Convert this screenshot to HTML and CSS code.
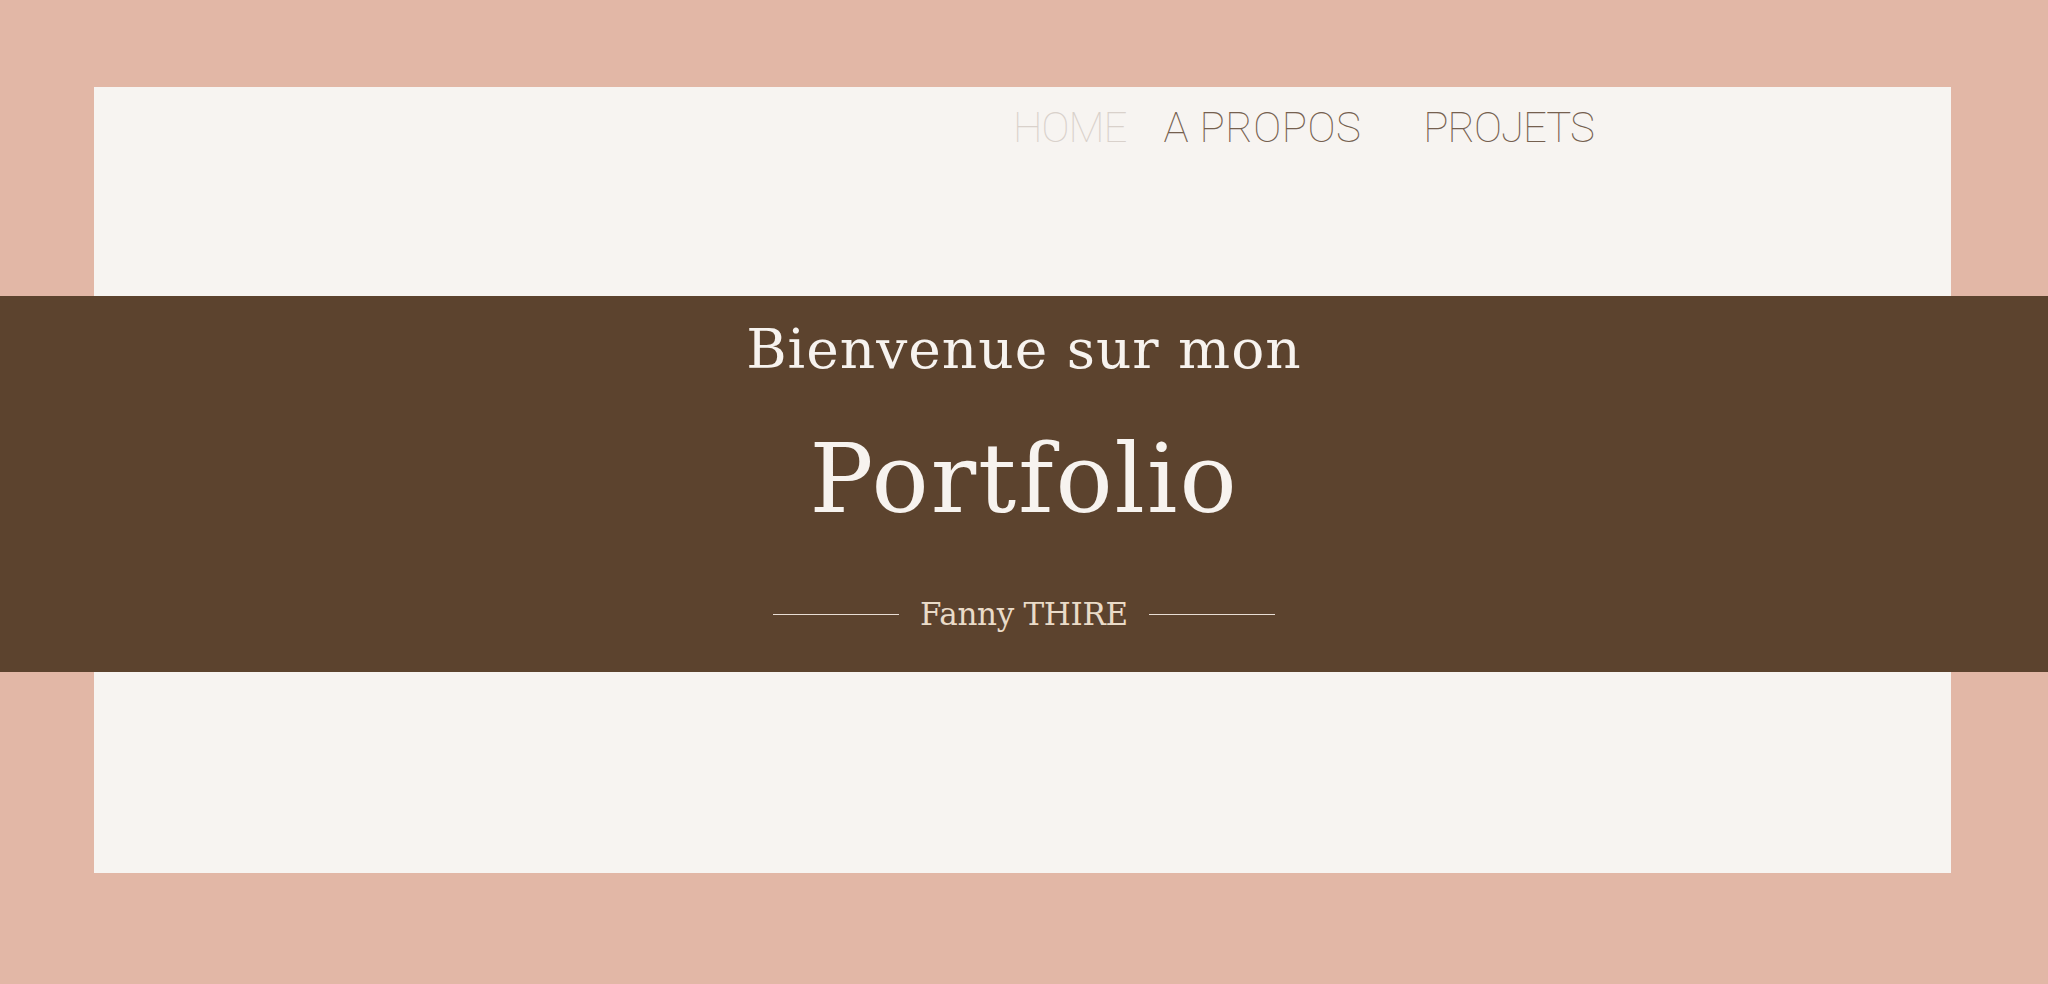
FILE: index.html
```html
<!DOCTYPE html>
<html lang="fr">
<head>
<meta charset="utf-8">
<title>Portfolio - Fanny THIRE</title>
<link rel="stylesheet" href="styles.css">
</head>
<body>
<div class="panel">
  <nav class="nav">
    <a class="nav-link nav-active" href="#">HOME</a>
    <a class="nav-link nav-apropos" href="#">A PROPOS</a>
    <a class="nav-link nav-projets" href="#">PROJETS</a>
  </nav>
  <header class="hero">
    <h2 class="hero-sub">Bienvenue sur mon</h2>
    <h1 class="hero-title">Portfolio</h1>
    <div class="hero-name">
      <span class="rule"></span>
      <span class="name">Fanny THIRE</span>
      <span class="rule"></span>
    </div>
  </header>
  <div class="panel-bottom"></div>
</div>
</body>
</html>
```

FILE: styles.css
```css
html, body {
  margin: 0;
  padding: 0;
}
body {
  background: #e2b7a6;
  padding-top: 87px;
  height: 984px;
  box-sizing: border-box;
  overflow: hidden;
}
.panel {
  margin: 0 97px 0 94px;
  background: #f7f4f1;
  height: 786px;
  display: flex;
  flex-direction: column;
}
.nav {
  height: 209px;
  box-sizing: border-box;
  padding: 16px 0 0 919px;
  display: flex;
  align-items: flex-start;
  font-family: "Roboto", "Inter", sans-serif;
  font-weight: 100;
  font-size: 42px;
  line-height: 50px;
}
.nav-link {
  text-decoration: none;
  color: #75604f;
  letter-spacing: -1px;
}
.nav-active {
  color: #d9d1cb;
}
.nav-apropos {
  margin-left: 37px;
  letter-spacing: 0.5px;
}
.nav-projets {
  margin-left: 62px;
}
.hero {
  margin: 0 -97px 0 -94px;
  height: 376px;
  background: #5c432e;
  display: flex;
  flex-direction: column;
  align-items: center;
  font-family: "DejaVu Serif", "Liberation Serif", serif;
  color: #f7f3ef;
}
.hero-sub {
  margin: 21px 0 0 0;
  font-weight: normal;
  font-size: 55px;
  line-height: 64px;
  letter-spacing: 1px;
}
.hero-title {
  margin: 48px 0 0 0;
  font-weight: normal;
  font-size: 95px;
  line-height: 100px;
  letter-spacing: 2px;
}
.hero-name {
  margin-top: 67px;
  display: flex;
  align-items: center;
  gap: 21px;
}
.rule {
  width: 126px;
  height: 1px;
  background: #e8ddd4;
}
.name {
  font-size: 31px;
  line-height: 36px;
  color: #eadbc8;
  letter-spacing: -0.3px;
}
.panel-bottom {
  flex: 1;
}
```
